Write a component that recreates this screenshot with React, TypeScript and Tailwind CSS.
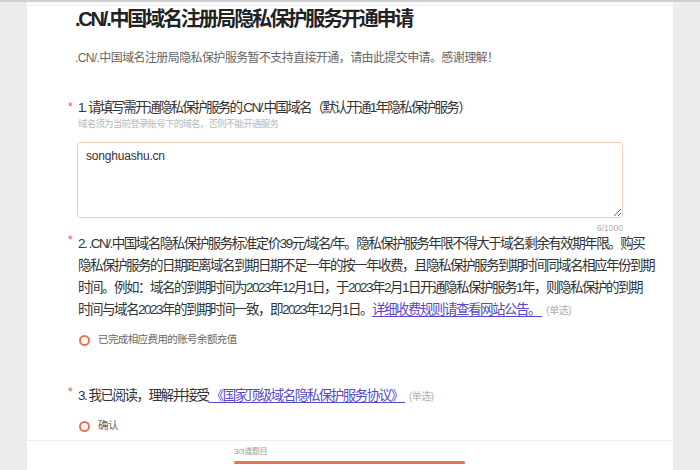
export default function App() {
  return (
    <div className="h-[470px] w-[700px] overflow-hidden bg-[#ececef] font-['Liberation_Sans','Noto_Sans_CJK_SC',sans-serif]">
      <div className="h-[2px] bg-[#cfcfd2]" />
      <div className="mx-[27px] flex h-[468px] flex-col bg-white">
        <div className="h-px bg-[#f2f2f2] mt-[3px]" />
        <div className="pl-[48px]">
          <h1 className="pt-px text-[20px] font-bold leading-[24px] tracking-[-2.2px] text-[#222]">
            .CN/.中国域名注册局隐私保护服务开通申请
          </h1>
          <p className="mt-[19px] text-[12px] leading-[16px] tracking-[-0.6px] text-[#666]">
            .CN/.中国域名注册局隐私保护服务暂不支持直接开通，请由此提交申请。感谢理解！
          </p>
        </div>

        <div className="pl-[41px]">
          {/* question 1 */}
          <div className="mt-[34px] flex">
            <span className="w-[10px] text-[12px] leading-[14px] text-[#e0604f]">*</span>
            <div>
              <p className="text-[13.5px] leading-[16px] tracking-[-1.7px] text-[#333]">
                1. 请填写需开通隐私保护服务的.CN/.中国域名（默认开通1年隐私保护服务）
              </p>
              <p className="mt-px text-[9.5px] leading-[14px] tracking-[-0.8px] text-[#b8b8b8]">
                域名须为当前登录账号下的域名，否则不能开通服务
              </p>
            </div>
          </div>
          <div className="ml-[9px] mt-[11px]">
            <textarea
              autoFocus
              defaultValue="songhuashu.cn"
              className="block h-[76px] w-[546px] rounded-[3px] border border-[#efcfc3] px-[8px] py-[5px] text-[12px] leading-[16px] tracking-[-0.2px] text-[#333] caret-[#333] outline-none"
            />
            <div className="mt-[5px] w-[546px] text-right text-[8.5px] leading-[10px] text-[#b0b0b0]">6/1000</div>
          </div>

          {/* question 2 */}
          <div className="flex">
            <span className="w-[10px] text-[12px] leading-[14px] text-[#e0604f]">*</span>
            <p className="whitespace-nowrap text-[13.5px] leading-[22px] tracking-[-1.5px] text-[#333]">
              2. .CN/.中国域名隐私保护服务标准定价39元/域名/年。隐私保护服务年限不得大于域名剩余有效期年限。购买
              <br />
              隐私保护服务的日期距离域名到期日期不足一年的按一年收费，且隐私保护服务到期时间同域名相应年份到期
              <br />
              时间。例如：域名的到期时间为2023年12月1日，于2023年2月1日开通隐私保护服务1年，则隐私保护的到期
              <br />
              时间与域名2023年的到期时间一致，即2023年12月1日。
              <span className="text-[#5549c9] underline decoration-[#5549c9] underline-offset-2">详细收费规则请查看网站公告。 </span>
              <span className="ml-[4px] text-[10px] tracking-[-0.5px] text-[#b0b0b0]">(单选)</span>
            </p>
          </div>
          <div className="mt-[10px] ml-[11px] flex h-[16px] items-center gap-[8px]">
            <span className="h-[11px] w-[11px] rounded-full border-[2.5px] border-[#e8735a]" />
            <span className="text-[10.5px] tracking-[-0.6px] text-[#666]">已完成相应费用的账号余额充值</span>
          </div>

          {/* question 3 */}
          <div className="mt-[37px] flex">
            <span className="w-[10px] text-[12px] leading-[14px] text-[#e0604f]">*</span>
            <p className="text-[13.5px] leading-[22px] tracking-[-1.5px] text-[#333]">
              3. 我已阅读，理解并接受
              <span className="text-[#5549c9] underline decoration-[#5549c9] underline-offset-2"> 《国家顶级域名隐私保护服务协议》 </span>
              <span className="ml-[4px] text-[10px] tracking-[-0.5px] text-[#b0b0b0]">(单选)</span>
            </p>
          </div>
          <div className="mt-[10px] ml-[11px] flex h-[16px] items-center gap-[8px]">
            <span className="h-[11px] w-[11px] rounded-full border-[2.5px] border-[#e8735a]" />
            <span className="text-[10.5px] tracking-[-0.6px] text-[#666]">确认</span>
          </div>
        </div>

        {/* footer progress */}
        <div className="mt-[6px] border-t border-[#eeeeee] pl-[207px] pt-[6px]">
          <div className="text-[8px] leading-[10px] tracking-[-0.3px] text-[#9a9a9a]">3/3道题目</div>
          <div className="mt-[4px] h-[2.5px] w-[231px] rounded-full bg-[#e8735a]" />
        </div>
      </div>
    </div>
  );
}
